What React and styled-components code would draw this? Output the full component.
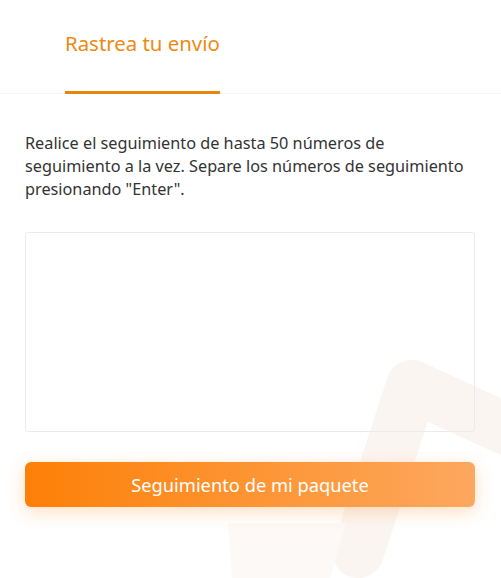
import styled, { createGlobalStyle } from "styled-components";

const GlobalStyle = createGlobalStyle`
    * { box-sizing: border-box; }
    html, body {
        margin: 0;
        padding: 0;
        background: #fff;
    }
    body {
        font-family: "Noto Sans", "Open Sans", Arial, sans-serif;
        color: #333;
    }
`;

const Page = styled.div`
    position: relative;
    width: 501px;
    height: 578px;
    overflow: hidden;
    background: #fff;
`;

const Watermark = styled.svg`
    position: absolute;
    left: 0;
    top: 0;
    width: 501px;
    height: 578px;
    pointer-events: none;
`;

const Header = styled.div`
    position: relative;
    height: 94px;
    display: flex;
    align-items: stretch;
    padding-left: 65px;
    border-bottom: 1px solid #f4f4f4;
`;

const Tab = styled.div`
    display: flex;
    align-items: flex-start;
    padding-top: 29px;
    font-size: 20.4px;
    color: ${(p) => (p.active ? "#ee8a12" : "#666")};
    border-bottom: 3px solid ${(p) => (p.active ? "#e8860c" : "transparent")};
    margin-bottom: -1px;
`;

const Body = styled.div`
    position: relative;
    padding: 38px 26px 0 25px;
    display: flex;
    flex-direction: column;
`;

const Intro = styled.p`
    margin: 0;
    font-size: 16.25px;
    line-height: 23px;
    color: #333;
`;

const Numbers = styled.textarea`
    margin-top: 31px;
    width: 450px;
    height: 200px;
    border: 1px solid #ebebeb;
    border-radius: 3px;
    background: transparent;
    resize: none;
    outline: none;
    padding: 10px 12px;
    font: inherit;
    font-size: 15px;
`;

const TrackButton = styled.button`
    margin-top: 30px;
    width: 450px;
    height: 45px;
    border: none;
    border-radius: 6px;
    background: linear-gradient(90deg, #fd8007 0%, #fda85f 100%);
    box-shadow: 0 5px 18px rgba(253, 140, 40, 0.28);
    color: #fff;
    font-family: inherit;
    font-size: 18.3px;
    cursor: pointer;
`;

const Logo = () => (
    <Watermark viewBox="0 0 501 578">
        <g stroke="#fbf5f1" strokeWidth="52" strokeLinecap="round" strokeLinejoin="round" fill="none">
            <path d="M412 386 L358 552" />
            <path d="M412 386 L530 440" />
        </g>
        <path d="M228 523 L346 523 L330 578 L232 578 Z" fill="#fdf9f6" />
    </Watermark>
);

const App = () => {
    return (
        <Page>
            <GlobalStyle />
            <Logo />
            <Header>
                <Tab active>Rastrea tu envío</Tab>
            </Header>
            <Body>
                <Intro>
                    Realice el seguimiento de hasta 50 números de seguimiento a la vez. Separe los números de seguimiento presionando "Enter".
                </Intro>
                <Numbers />
                <TrackButton>Seguimiento de mi paquete</TrackButton>
            </Body>
        </Page>
    );
};

export default App;
